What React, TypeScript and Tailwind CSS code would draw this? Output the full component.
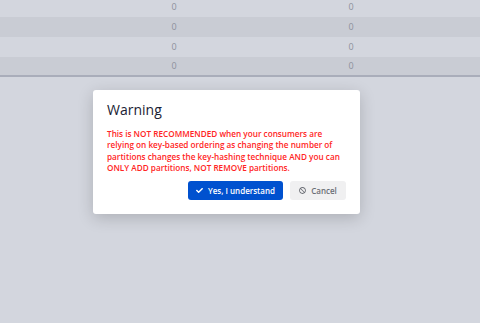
import { FaCheck, FaBan } from "react-icons/fa";

const rows = [0, 1, 2, 3];

export default function App() {
  return (
    <div
      className="relative w-[480px] h-[323px] overflow-hidden bg-[#d3d6de]"
      style={{ fontFamily: '"Open Sans", "Noto Sans", sans-serif' }}
    >
      <div className="-mt-[3px] border-b-2 border-[#a9adba]">
        {rows.map((r) => (
          <div
            key={r}
            className={
              "grid grid-cols-[154px_40px_137px_40px_1fr] items-center text-[9px] text-[#8d919c] " +
              (r === 3 ? "h-[18px] " : "h-[20px] ") +
              (r % 2 === 1 ? "bg-[#c9ccd4]" : "bg-[#d3d6de]")
            }
          >
            <span />
            <span className="text-center">0</span>
            <span />
            <span className="text-center">0</span>
            <span />
          </div>
        ))}
      </div>

      <div className="absolute left-[93px] top-[90px] w-[267px] rounded-[3px] bg-white px-[14px] pt-[10px] pb-[14px] shadow-[0_4px_16px_rgba(0,0,0,0.18)]">
        <h2 className="text-[14px] leading-[20px] font-medium text-[#1a2234]">Warning</h2>
        <p className="mt-[8px] text-[8.2px] leading-[11.3px] font-semibold text-[#ff2424]">
          This is NOT RECOMMENDED when your consumers are relying on key-based ordering as changing the number of partitions changes the key-hashing technique AND you can ONLY ADD partitions, NOT REMOVE partitions.
        </p>
        <div className="mt-[8px] flex justify-end gap-[7px]">
          <button className="flex h-[19px] w-[95px] items-center justify-center gap-[5px] rounded-[3px] bg-[#0051cf] text-[8px] font-semibold text-white">
            <FaCheck className="h-[7px] w-[7px]" />
            Yes, I understand
          </button>
          <button className="flex h-[19px] w-[56px] items-center justify-center gap-[5px] rounded-[3px] bg-[#f0f0f1] text-[8px] font-semibold text-[#6b6e75]">
            <FaBan className="h-[7px] w-[7px]" />
            Cancel
          </button>
        </div>
      </div>
    </div>
  );
}
